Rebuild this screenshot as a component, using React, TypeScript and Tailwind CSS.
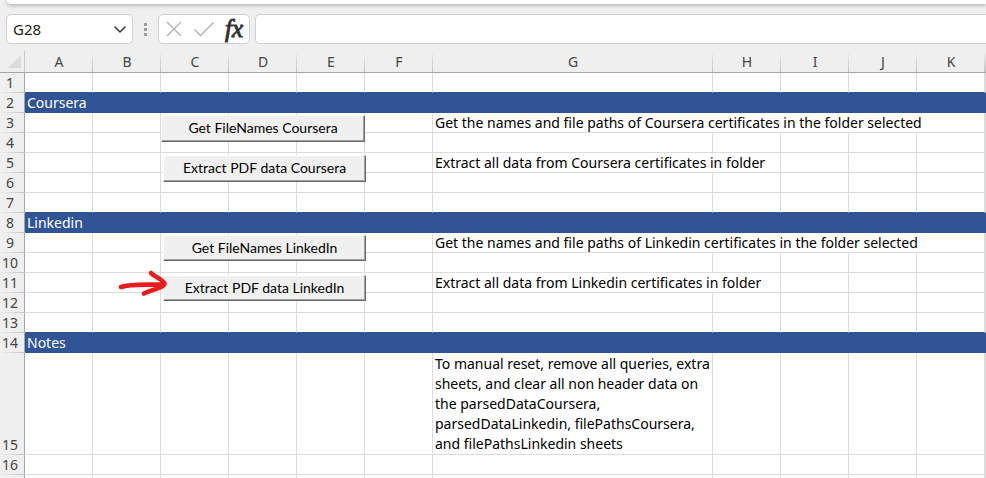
import type { ReactNode } from "react";

const columns = ["A", "B", "C", "D", "E", "F", "G", "H", "I", "J", "K", ""];

type Row = {
  id: number;
  banner?: string;
  text?: string;
  span?: number;
  tall?: boolean;
  control?: ReactNode;
};

function MacroButton({ className, children }: { className: string; children: ReactNode }) {
  return (
    <button
      type="button"
      className={`absolute top-[2px] z-10 border border-t-white border-l-white border-r-[#696969] border-b-[#696969] bg-[#f0f0f0] pb-[2px] text-center font-['Lato','Noto_Sans',sans-serif] text-[14px] whitespace-nowrap text-black shadow-[inset_-1px_-1px_0_#a0a0a0] ${className}`}
    >
      {children}
    </button>
  );
}

function RedArrow() {
  return (
    <svg
      className="pointer-events-none absolute -top-1 -left-11 z-20"
      width="52"
      height="30"
      viewBox="0 0 52 30"
      fill="none"
      stroke="#e81c1c"
      strokeWidth="4.6"
      strokeLinecap="round"
      strokeLinejoin="round"
      aria-hidden="true"
    >
      <path d="M4 18C14 14.500 28 16 46 15.500" />
      <path d="M34 4C37 7.500 45 9.500 47.500 14.500C46 19.500 34 20.500 27 24.500" />
    </svg>
  );
}

const rows: Row[] = [
  { id: 1 },
  { id: 2, banner: "Coursera" },
  {
    id: 3,
    text: "Get the names and file paths of Coursera certificates in the folder selected",
    span: 5,
    control: <MacroButton className="left-0 h-[27px] w-[204px]">Get FileNames Coursera</MacroButton>,
  },
  { id: 4 },
  {
    id: 5,
    text: "Extract all data from Coursera certificates in folder",
    span: 2,
    control: <MacroButton className="left-[2px] h-[27px] w-[203px]">Extract PDF data Coursera</MacroButton>,
  },
  { id: 6 },
  { id: 7 },
  { id: 8, banner: "Linkedin" },
  {
    id: 9,
    text: "Get the names and file paths of Linkedin certificates in the folder selected",
    span: 5,
    control: <MacroButton className="left-[2px] h-[26px] w-[203px]">Get FileNames LinkedIn</MacroButton>,
  },
  { id: 10 },
  {
    id: 11,
    text: "Extract all data from Linkedin certificates in folder",
    span: 2,
    control: (
      <>
        <MacroButton className="left-[2px] h-[26px] w-[203px]">Extract PDF data LinkedIn</MacroButton>
        <RedArrow />
      </>
    ),
  },
  { id: 12 },
  { id: 13 },
  { id: 14, banner: "Notes" },
  {
    id: 15,
    tall: true,
    text: "To manual reset, remove all queries, extra sheets, and clear all non header data on the parsedDataCoursera, parsedDataLinkedin, filePathsCoursera, and filePathsLinkedin sheets",
  },
  { id: 16 },
];

function FormulaBar() {
  return (
    <div className="flex h-[30px] items-stretch pl-[6px]">
      <div className="flex w-[127px] items-center rounded-[5px] border border-[#d0d0d0] bg-white">
        <input
          aria-label="Name box"
          defaultValue="G28"
          className="w-0 flex-1 bg-transparent pl-[6px] text-[15px] text-[#222] outline-none"
        />
        <button type="button" aria-label="Show names" className="pr-[5px]">
          <svg width="14" height="10" viewBox="0 0 14 10" fill="none" stroke="#333" strokeWidth="1.5">
            <path d="M1.500 2.500L7 8L12.500 2.500" />
          </svg>
        </button>
      </div>
      <svg className="mx-[10px] w-[5px] shrink-0" viewBox="0 0 5 30" fill="#9a9a9a" aria-hidden="true">
        <path d="M1 9h3v3h-3zM1 14h3v3h-3zM1 19h3v3h-3z" />
      </svg>
      <div className="flex w-[92px] items-center justify-between rounded-[5px] border border-[#d0d0d0] bg-white px-[6px]">
        <button type="button" aria-label="Cancel">
          <svg width="18" height="18" viewBox="0 0 18 18" fill="none" stroke="#b0b0b0" strokeWidth="1.3">
            <path d="M2 2L16 16M16 2L2 16" />
          </svg>
        </button>
        <button type="button" aria-label="Enter">
          <svg width="22" height="18" viewBox="0 0 22 18" fill="none" stroke="#b0b0b0" strokeWidth="1.4">
            <path d="M1.500 9.500L7.500 15.500L20.500 2.500" />
          </svg>
        </button>
        <button
          type="button"
          aria-label="Insert function"
          className="font-['Liberation_Serif',serif] text-[25px] leading-[26px] text-[#222] italic [-webkit-text-stroke:1px_#3a3a3a]"
        >
          fx
        </button>
      </div>
      <input
        aria-label="Formula"
        className="ml-[5px] min-w-0 flex-1 rounded-l-[5px] border border-r-0 border-[#d0d0d0] bg-white px-2 outline-none"
      />
    </div>
  );
}

function SheetRow({ row, beforeBanner }: { row: Row; beforeBanner: boolean }) {
  const line = beforeBanner ? "border-b-[#305496]" : "border-b-[#dcdcdc]";
  const cell = `border-r border-b border-r-[#dcdcdc] ${line}`;
  const rest = 12 - 6 - (row.span ?? 1);

  return (
    <tr className={row.tall ? "h-[102px]" : "h-[20px]"}>
      <th
        scope="row"
        className="relative border-r border-b border-r-[#a6a6a6] border-b-[#efefef] bg-[#efefef] pr-[4px] text-center align-bottom font-normal text-[#444]"
      >
        {row.id}
        <span className="absolute inset-x-0 -bottom-px h-px bg-linear-to-r from-[#efefef] to-[#c4c4c4]" />
      </th>
      {row.banner ? (
        <td colSpan={12} className="border-b border-b-[#305496] bg-[#305496] pl-[2px] text-white">
          {row.banner}
        </td>
      ) : (
        <>
          <td className={cell} />
          <td className={cell} />
          <td className={`relative ${cell}`}>{row.control}</td>
          <td className={cell} />
          <td className={cell} />
          <td className={cell} />
          <td
            colSpan={row.span ?? 1}
            className={`pl-[2px] text-black ${row.tall ? "align-bottom leading-[20px]" : "whitespace-nowrap"} ${cell}`}
          >
            {row.text}
          </td>
          {Array.from({ length: rest }, (_, i) => (
            <td key={i} className={cell} />
          ))}
        </>
      )}
    </tr>
  );
}

export default function App() {
  return (
    <div className="h-screen overflow-hidden bg-[#efefef] font-['Noto_Sans','Open_Sans',sans-serif] text-[14px] leading-[19px]">
      <div className="mb-[10px] ml-[7px] h-[4px] rounded-bl-[6px] bg-white shadow-[0_1px_4px_rgba(0,0,0,0.35)]" />
      <FormulaBar />
      <table className="mt-[7px] w-full table-fixed border-separate border-spacing-0 bg-white">
        <colgroup>
          <col className="w-[25px]" />
          {columns.map((name, i) => (
            <col key={i} className={name === "G" ? "w-[280px]" : name === "" ? "" : "w-[68px]"} />
          ))}
        </colgroup>
        <thead>
          <tr className="h-[22px] bg-[#efefef] text-[#444]">
            <td className="border-r border-b border-r-[#c8c8c8] border-b-[#a6a6a6]">
              <svg className="ml-[8px]" width="14" height="14" viewBox="0 0 14 14" fill="#dcdcdc" aria-hidden="true">
                <path d="M13 0V13H0Z" />
              </svg>
            </td>
            {columns.map((name, i) => (
              <th key={i} scope="col" className="relative border-b border-b-[#a6a6a6] font-normal">
                {name}
                <span className="absolute inset-y-0 right-0 w-px bg-linear-to-b from-[#efefef] to-[#c4c4c4]" />
              </th>
            ))}
          </tr>
        </thead>
        <tbody>
          {rows.map((row, i) => (
            <SheetRow key={row.id} row={row} beforeBanner={Boolean(rows[i + 1]?.banner)} />
          ))}
          <tr className="h-[20px]">
            <th className="border-r border-r-[#a6a6a6] bg-[#efefef]" />
            {columns.map((_, i) => (
              <td key={i} className="border-r border-r-[#dcdcdc]" />
            ))}
          </tr>
        </tbody>
      </table>
    </div>
  );
}
